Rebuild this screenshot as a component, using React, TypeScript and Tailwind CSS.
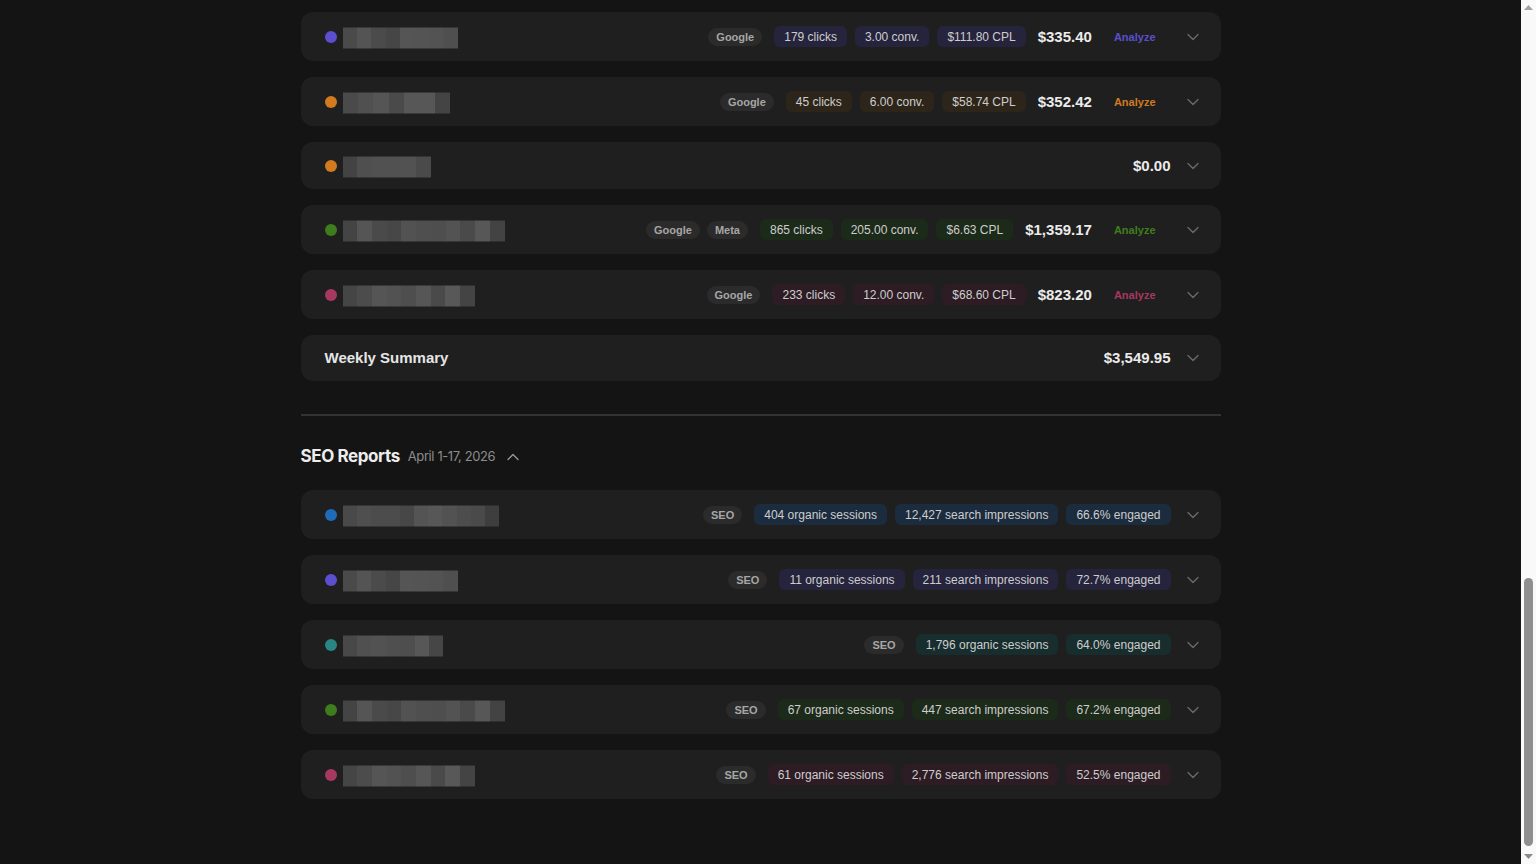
import React from "react";
import { ChevronDown, ChevronUp } from "lucide-react";

type AccentKey = "purple" | "orange" | "green" | "crimson" | "blue" | "teal";

const ACCENTS: Record<AccentKey, { dot: string; pill: string; link: string }> = {
  purple: { dot: "bg-[#5b4fcf]", pill: "bg-[#26243d]", link: "text-[#5b4fcf]" },
  orange: { dot: "bg-[#d17a22]", pill: "bg-[#2d251a]", link: "text-[#d17a22]" },
  green: { dot: "bg-[#3f7d1c]", pill: "bg-[#1c2a19]", link: "text-[#3f7d1c]" },
  crimson: { dot: "bg-[#a8385f]", pill: "bg-[#2e1c25]", link: "text-[#a8385f]" },
  blue: { dot: "bg-[#1f6bb8]", pill: "bg-[#1b2c3e]", link: "text-[#1f6bb8]" },
  teal: { dot: "bg-[#2a8585]", pill: "bg-[#182d2d]", link: "text-[#2a8585]" },
};

type Name = { width: number; shades: string[] };

const NAMES: Record<string, Name> = {
  purple: {
    width: 115,
    shades: ["#4a4a4a", "#545454", "#4b4b4b", "#464646", "#555555", "#545454", "#535353", "#4f4f4f"],
  },
  orangeA: {
    width: 108,
    shades: ["#4a4a4a", "#505050", "#555555", "#4a4a4a", "#575757", "#575757", "#444444"],
  },
  orangeB: {
    width: 88,
    shades: ["#434343", "#4f4f4f", "#515151", "#515151", "#525252", "#4a4a4a"],
  },
  green: {
    width: 162,
    shades: [
      "#444444", "#555555", "#4a4a4a", "#474747", "#525252", "#4f4f4f",
      "#4e4e4e", "#535353", "#4a4a4a", "#575757", "#434343",
    ],
  },
  crimson: {
    width: 132,
    shades: ["#454545", "#4c4c4c", "#555555", "#525252", "#4e4e4e", "#565656", "#4a4a4a", "#585858", "#444444"],
  },
  blue: {
    width: 157,
    shades: [
      "#494949", "#4f4f4f", "#4c4c4c", "#4c4c4c", "#474747", "#545454",
      "#575757", "#525252", "#4d4d4d", "#4a4a4a", "#3e3e3e",
    ],
  },
  teal: {
    width: 101,
    shades: ["#484848", "#505050", "#525252", "#4f4f4f", "#4e4e4e", "#575757", "#464646"],
  },
};

type RowData = {
  accent: AccentKey;
  name: Name;
  badges: string[];
  metrics: string[];
  amount?: string;
  analyze?: boolean;
};

function Redacted({ name }: { name: Name }) {
  return (
    <div
      className="ml-1.5 -my-1 flex h-[21px] shrink-0 translate-y-[1.5px]"
      style={{ width: name.width }}
    >
      {name.shades.map((c, i) => (
        <div key={i} className="h-full flex-1" style={{ backgroundColor: c }} />
      ))}
    </div>
  );
}

function Row({ row }: { row: RowData }) {
  const a = ACCENTS[row.accent];
  return (
    <div className="flex items-center rounded-xl bg-[#1f1f1f] py-3.5 pl-6 pr-[18px]">
      <span className={`h-3 w-3 shrink-0 rounded-full ${a.dot}`} />
      <Redacted name={row.name} />
      <div className="ml-auto flex items-center gap-3">
        {row.badges.length > 0 && (
          <div className="flex items-center gap-[7px]">
            {row.badges.map((b) => (
              <span
                key={b}
                className="h-[18px] rounded-full bg-[#2b2b2b] px-2 text-[11px] font-bold leading-[18px] text-[#a6a6a6]"
              >
                {b}
              </span>
            ))}
          </div>
        )}
        {row.metrics.length > 0 && (
          <div className="flex items-center gap-2">
            {row.metrics.map((m) => (
              <span
                key={m}
                className={`h-[21px] rounded-md px-2.5 pt-px text-xs leading-[21px] text-[#cdcdcd] ${a.pill}`}
              >
                {m}
              </span>
            ))}
          </div>
        )}
        {row.amount && (
          <span className="text-[15px] font-bold leading-[19px] text-[#ebebeb]">{row.amount}</span>
        )}
        {row.analyze && (
          <button className={`pl-2.5 pr-[15px] text-[11px] font-bold leading-4 ${a.link}`}>Analyze</button>
        )}
        <ChevronDown size={20} strokeWidth={1.5} className="-my-1 shrink-0 text-[#6b6b6b]" />
      </div>
    </div>
  );
}

function SummaryRow({ amount }: { amount: string }) {
  return (
    <div className="flex items-center rounded-xl bg-[#1f1f1f] py-3.5 pl-6 pr-[18px]">
      <span className="text-[15px] font-bold leading-[18px] text-[#e6e6e6]">Weekly Summary</span>
      <div className="ml-auto flex items-center gap-3">
        <span className="text-[15px] font-bold leading-[18px] text-[#ebebeb]">{amount}</span>
        <ChevronDown size={20} strokeWidth={1.5} className="-my-1 shrink-0 text-[#6b6b6b]" />
      </div>
    </div>
  );
}

function SectionHeader({ title }: { title: string }) {
  return (
    <div className="flex h-[26px] items-center gap-2 font-[Inter,sans-serif]">
      <span className="text-[17px] font-bold tracking-[-0.4px] text-[#ededed]">{title}</span>
      <span className="text-[13px] tracking-[-0.4px] text-[#8c8c8c]">April 1-17, 2026</span>
      <ChevronUp size={20} strokeWidth={1.5} className="text-[#9a9a9a]" />
    </div>
  );
}

const paid = (
  accent: AccentKey,
  name: Name,
  badges: string[],
  metrics: string[],
  amount: string,
  analyze = true
): RowData => ({ accent, name, badges, metrics, amount, analyze });

const PAID_ROWS: RowData[] = [
  paid("purple", NAMES.purple, ["Google"], ["179 clicks", "3.00 conv.", "$111.80 CPL"], "$335.40"),
  paid("orange", NAMES.orangeA, ["Google"], ["45 clicks", "6.00 conv.", "$58.74 CPL"], "$352.42"),
  paid("orange", NAMES.orangeB, [], [], "$0.00", false),
  paid("green", NAMES.green, ["Google", "Meta"], ["865 clicks", "205.00 conv.", "$6.63 CPL"], "$1,359.17"),
  paid("crimson", NAMES.crimson, ["Google"], ["233 clicks", "12.00 conv.", "$68.60 CPL"], "$823.20"),
];

const SEO_ROWS: RowData[] = [
  {
    accent: "blue",
    name: NAMES.blue,
    badges: ["SEO"],
    metrics: ["404 organic sessions", "12,427 search impressions", "66.6% engaged"],
  },
  {
    accent: "purple",
    name: NAMES.purple,
    badges: ["SEO"],
    metrics: ["11 organic sessions", "211 search impressions", "72.7% engaged"],
  },
  {
    accent: "teal",
    name: NAMES.teal,
    badges: ["SEO"],
    metrics: ["1,796 organic sessions", "64.0% engaged"],
  },
  {
    accent: "green",
    name: NAMES.green,
    badges: ["SEO"],
    metrics: ["67 organic sessions", "447 search impressions", "67.2% engaged"],
  },
  {
    accent: "crimson",
    name: NAMES.crimson,
    badges: ["SEO"],
    metrics: ["61 organic sessions", "2,776 search impressions", "52.5% engaged"],
  },
];

function Scrollbar() {
  return (
    <div className="flex h-screen w-[15px] shrink-0 flex-col bg-[#f9f9f9]">
      <div className="flex h-[15px] items-center justify-center">
        <svg width="9" height="5" viewBox="0 0 9 5">
          <path d="M0 5 L4.5 0 L9 5 Z" fill="#a3a3a3" />
        </svg>
      </div>
      <div className="flex flex-1 flex-col justify-end px-[3px] pb-[3px]">
        <div className="h-[268px] rounded-full bg-[#8f8f8f]" />
      </div>
      <div className="flex h-[15px] items-center justify-center">
        <svg width="9" height="5" viewBox="0 0 9 5">
          <path d="M0 0 L4.5 5 L9 0 Z" fill="#8a8a8a" />
        </svg>
      </div>
    </div>
  );
}

export default function App() {
  return (
    <div className="flex h-screen overflow-hidden bg-[#141414] font-['Liberation_Sans',Arial,sans-serif]">
      <main className="min-w-0 flex-1">
        <div className="mx-auto w-[920px] pb-[65px] pt-3">
          <div className="flex flex-col gap-4">
            {PAID_ROWS.map((r, i) => (
              <Row key={i} row={r} />
            ))}
            <SummaryRow amount="$3,549.95" />
          </div>

          <div className="mt-[33px] h-0.5 bg-[#333333]" />

          <div className="mb-5 mt-7">
            <SectionHeader title="SEO Reports" />
          </div>
          <div className="flex flex-col gap-4">
            {SEO_ROWS.map((r, i) => (
              <Row key={i} row={r} />
            ))}
          </div>
        </div>
      </main>
      <Scrollbar />
    </div>
  );
}
